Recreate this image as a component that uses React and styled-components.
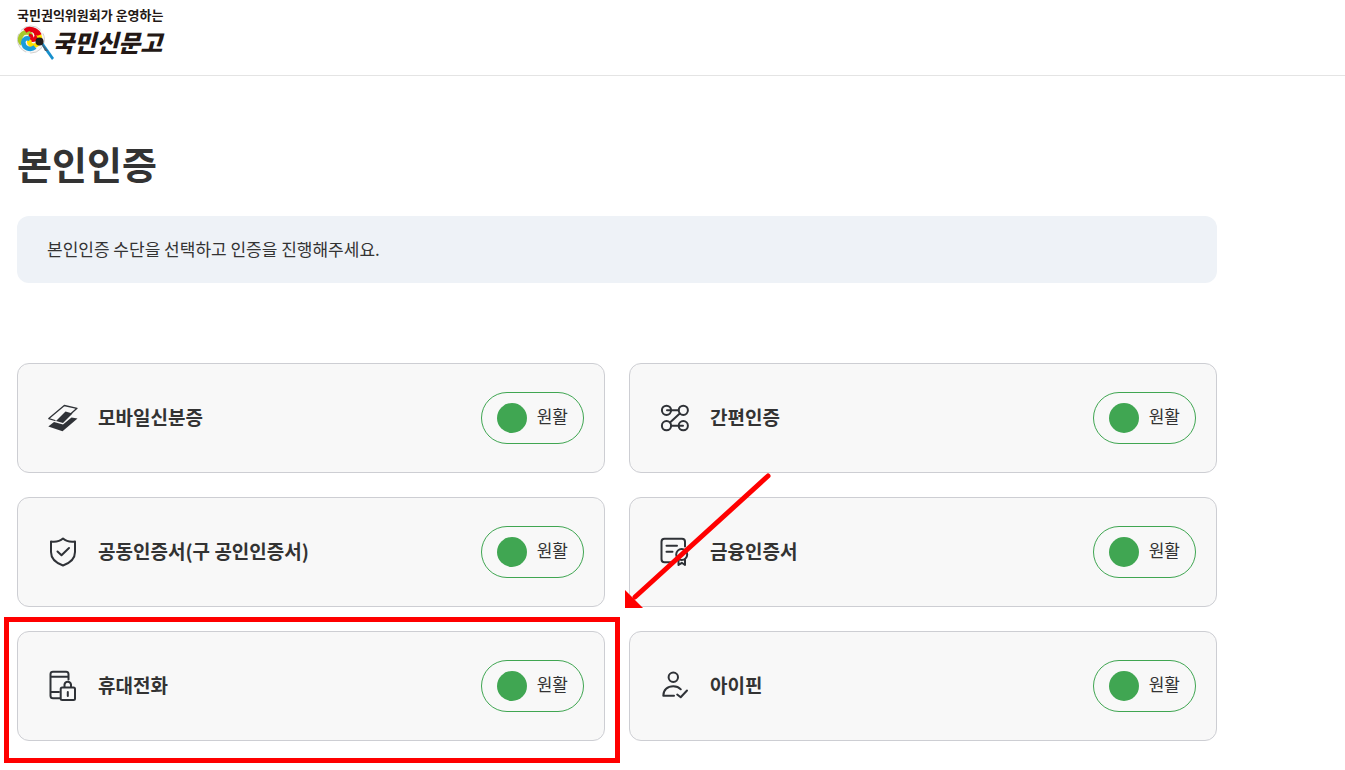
import React from 'react';
import styled, { createGlobalStyle, css } from 'styled-components';

const GlobalStyle = createGlobalStyle`
  * {
    box-sizing: border-box;
  }

  body {
    margin: 0;
    background: #fff;
    color: #333;
    font-family: 'Noto Sans CJK KR', 'Noto Sans', sans-serif;
  }
`;

const Header = styled.header`
  padding: 6px 17px 14px;
  border-bottom: 1px solid #e4e4e4;
`;

const LogoLink = styled.a`
  display: inline-flex;
  flex-direction: column;
  vertical-align: top;
  color: #231815;
  text-decoration: none;
`;

const LogoCaption = styled.span`
  font-size: 13px;
  line-height: 18px;
  font-weight: 700;
`;

const LogoRow = styled.span`
  display: flex;
  align-items: flex-start;
  height: 37px;
`;

const LogoSvg = styled.svg`
  flex: none;
  width: 35px;
  height: 37px;
  overflow: visible;
`;

const LogoName = styled.strong`
  font-size: 24px;
  line-height: 36px;
  font-weight: 900;
  font-style: italic;
`;

const Main = styled.main`
  padding: 59px 17px 22px;
`;

const Content = styled.div`
  max-width: 1200px;
`;

const Title = styled.h1`
  margin: 0 0 25px;
  font-size: 38px;
  line-height: 56px;
  font-weight: 700;
`;

const Notice = styled.p`
  margin: 0 0 80px;
  padding: 19px 30px 21px;
  border-radius: 12px;
  background: #eef2f7;
  font-size: 17px;
  line-height: 27px;
`;

const MethodList = styled.ul`
  display: grid;
  grid-template-columns: repeat(2, minmax(0, 1fr));
  gap: 24px;
  margin: 0;
  padding: 0;
  list-style: none;
`;

const MethodItem = styled.li`
  position: relative;

  ${({ $framed }) =>
    $framed &&
    css`
      &::after {
        content: '';
        position: absolute;
        inset: -14px -15px -22px -13px;
        border: 5px solid #f00;
        pointer-events: none;
      }
    `}
`;

const MethodButton = styled.button`
  display: flex;
  align-items: center;
  gap: 19px;
  width: 100%;
  padding: 28px 20px 28px 29px;
  border: 1px solid #cdced3;
  border-radius: 12px;
  background: #f8f8f8;
  color: inherit;
  font-family: inherit;
  text-align: left;
  cursor: pointer;
`;

const MethodName = styled.span`
  flex: 1;
  padding-bottom: 2px;
  font-size: 19px;
  line-height: 28px;
  font-weight: 700;
`;

const Status = styled.span`
  display: flex;
  align-items: center;
  gap: 10px;
  height: 52px;
  padding: 0 15px;
  border: 1px solid #40a652;
  border-radius: 26px;

  &::before {
    content: '';
    width: 30px;
    height: 30px;
    border-radius: 50%;
    background: #40a652;
  }
`;

const StatusText = styled.span`
  padding-bottom: 4px;
  font-size: 17px;
  line-height: 28px;
`;

const IconSvg = styled.svg`
  flex: none;
  width: 32px;
  height: 32px;
  fill: none;
  stroke: #2f3237;
  stroke-width: 2;
`;

const ArrowSvg = styled.svg`
  position: absolute;
  top: -26px;
  left: -6px;
  z-index: 1;
  width: 148px;
  height: 138px;
  pointer-events: none;
`;

const swirlArm = 'M-9 -3C-8 -9 -1 -11 3 -7C5 -4 4 -1 0 0';

const LogoMark = () => (
  <LogoSvg viewBox="0 0 35 37" aria-hidden="true">
    <circle cx="14" cy="15.500" r="13.500" fill="#f6f5f4" stroke="#d2d0cf" strokeDasharray="22 4" />
    <g transform="translate(13 15)" fill="none" strokeWidth="4.500">
      <path d={swirlArm} stroke="#a8c92b" transform="rotate(-50)" />
      <path d={swirlArm} stroke="#e60012" transform="rotate(40)" />
      <path d={swirlArm} stroke="#ffe000" transform="rotate(130)" />
      <path d={swirlArm} stroke="#1b9dd9" transform="rotate(220)" />
      <path d="M0 -9C4 -10 8 -8 9.500 -4" stroke="#e60012" />
      <path d="M-1 -4C2 -4 3 -1 1 1" stroke="#e60012" strokeWidth="3" />
    </g>
    <path d="M22 17L25 17L37 34L35 36L30 29Z" fill="#168fcc" />
    <path d="M23 17L31 27L28 27Z" fill="#455f73" />
    <circle cx="22.500" cy="17.500" r="4" fill="#251e1c" />
  </LogoSvg>
);

const Icon = ({ children }) => (
  <IconSvg viewBox="0 0 32 32" strokeLinecap="round" strokeLinejoin="round" aria-hidden="true">
    {children}
  </IconSvg>
);

const MobileIdIcon = () => (
  <Icon>
    <path d="M8 18.500L1.800 16.600L17.300 3.500L30 6.300L23 12.500" strokeWidth="1.300" />
    <path d="M9 19L18.500 9.500L25.500 11.500L16 21Z" fill="#2f3237" stroke="none" />
    <path d="M1.300 24.500L7 20L16 22.500L24.500 15.500L30.500 16.500L15.500 29.300Z" fill="#2f3237" stroke="none" />
  </Icon>
);

const SimpleIcon = () => (
  <Icon>
    <circle cx="7.500" cy="8.300" r="4.600" />
    <circle cx="24.300" cy="8.300" r="4.600" />
    <circle cx="7.500" cy="23.700" r="4.600" />
    <circle cx="24.300" cy="23.700" r="4.600" />
    <path d="M8 8.300H19.500M20.800 11.500L11 20.500M12.500 23.700H24" />
  </Icon>
);

const ShieldIcon = () => (
  <Icon>
    <path d="M16 2.500C13 5.200 9 6.200 4 5.500V16C4 22.500 9 27 16 29.500C23 27 28 22.500 28 16V5.500C23 6.200 19 5.200 16 2.500Z" />
    <path d="M10.500 15.500L14.500 19.300L22 12" />
  </Icon>
);

const CertificateIcon = () => (
  <Icon>
    <path d="M15.500 26.300H5.500A3 3 0 0 1 2.500 23.300V5.700A3 3 0 0 1 5.500 2.700H23A3 3 0 0 1 26 5.700V10.500" />
    <path d="M7.500 9.700H18M7.500 15.700H13.500" />
    <circle cx="22.700" cy="18.500" r="5.500" />
    <path d="M19.500 23.500V29L22.800 26.800L26 29V23.500" />
  </Icon>
);

const PhoneIcon = () => (
  <Icon>
    <path d="M13 28.300H6A2.500 2.500 0 0 1 3.500 25.800V4A2.500 2.500 0 0 1 6 1.700H19A2.500 2.500 0 0 1 21.500 4V9.500" />
    <path d="M4 6.700H21M4 22H12" />
    <rect x="13.700" y="17.500" width="14.300" height="12.500" rx="1.500" />
    <path d="M17.500 17V14.500A3.300 3.300 0 0 1 24 14.500V17" />
    <path d="M20.800 22V26" />
  </Icon>
);

const IpinIcon = () => (
  <Icon>
    <circle cx="14.300" cy="7.300" r="4.700" />
    <path d="M15 25.700H4.300C4.300 20 8.500 16.200 14.300 16.200C17.500 16.200 20 17.300 21.800 19.300" />
    <path d="M18.200 24.500L21.700 27.300L28 20.500" />
  </Icon>
);

const Arrow = () => (
  <ArrowSvg viewBox="0 0 148 138" aria-hidden="true">
    <path d="M145 5L12 126" stroke="#f00" strokeWidth="5" strokeLinecap="round" />
    <path d="M2 119V137H20Z" fill="#f00" />
  </ArrowSvg>
);

const methods = [
  { name: '모바일신분증', icon: MobileIdIcon },
  { name: '간편인증', icon: SimpleIcon },
  { name: '공동인증서(구 공인인증서)', icon: ShieldIcon },
  { name: '금융인증서', icon: CertificateIcon, arrow: true },
  { name: '휴대전화', icon: PhoneIcon, framed: true },
  { name: '아이핀', icon: IpinIcon },
];

export default function App() {
  return (
    <>
      <GlobalStyle />
      <Header>
        <LogoLink href="#">
          <LogoCaption>국민권익위원회가 운영하는</LogoCaption>
          <LogoRow>
            <LogoMark />
            <LogoName>국민신문고</LogoName>
          </LogoRow>
        </LogoLink>
      </Header>
      <Main>
        <Content>
          <Title>본인인증</Title>
          <Notice>본인인증 수단을 선택하고 인증을 진행해주세요.</Notice>
          <MethodList>
            {methods.map(({ name, icon: MethodIcon, arrow, framed }) => (
              <MethodItem key={name} $framed={framed}>
                <MethodButton type="button">
                  <MethodIcon />
                  <MethodName>{name}</MethodName>
                  <Status>
                    <StatusText>원활</StatusText>
                  </Status>
                </MethodButton>
                {arrow && <Arrow />}
              </MethodItem>
            ))}
          </MethodList>
        </Content>
      </Main>
    </>
  );
}
